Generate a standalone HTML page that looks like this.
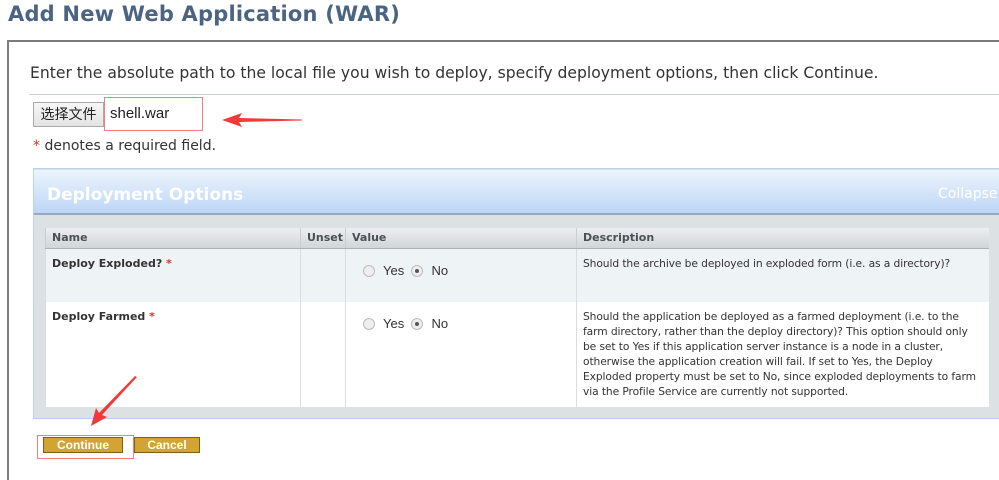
<!DOCTYPE html>
<html><head><meta charset="utf-8"><style>
*{box-sizing:border-box;margin:0;padding:0}
body{width:999px;height:473px;overflow:hidden;background:#fff;font-family:"DejaVu Sans",Verdana,sans-serif;position:relative}
.abs{position:absolute}
h1{position:absolute;left:8px;top:2px;font-size:21px;font-weight:bold;color:#4b6482;letter-spacing:0.2px;white-space:nowrap}
.box{left:7px;top:40px;width:1000px;height:440px;border:2px solid #7b7b7b;border-right:none;border-bottom:none}
.instr{left:30px;top:64px;font-size:15.6px;color:#333;white-space:nowrap}
.hr{left:29px;top:94px;width:970px;height:1px;background:#ccd3d8}
.fbtn{left:33px;top:102px;width:71px;height:25px;border:1px solid #a9a9a9;background:linear-gradient(#f7f7f7,#e3e3e3);font:14px "Noto Sans CJK SC",sans-serif;color:#222;text-align:center;line-height:23px}
.fname{left:110px;top:105px;font:15px "Liberation Sans",sans-serif;color:#222}
.redbox{border:1px solid #f08080}
.req{left:33px;top:138px;font-size:14px;color:#333;white-space:nowrap}
.req span{color:#e03030}
.panel{left:33px;top:168px;width:970px;height:251px;background:#dce1e4;border:1px solid #b9d0ee}
.phead{left:34px;top:170px;width:966px;height:45px;background:linear-gradient(#edf4fd,#bcd6f6);border-bottom:2px solid #97a9bd}
.ptitle{left:47px;top:185px;font-size:17px;font-weight:bold;color:#fff}
.coll{left:926px;top:186px;font-size:14px;color:#fff;white-space:nowrap}
table{position:absolute;left:45px;top:228px;width:944px;border-collapse:collapse;font-size:11px;color:#333}
th{height:20px;text-align:left;padding-left:6px;font-weight:bold;color:#4a5056;background:linear-gradient(#eceef0,#d2d6d9);border-left:1px solid #c8cdd1;border-bottom:1px solid #aab2b8}
td{vertical-align:top;border-left:1px solid #d8dde0;padding:8px 6px}
tr.r1 td{background:#eef3f6;height:54px}
tr.r2 td{background:#fff;height:104px}
td.n{font-weight:bold}
td.n span{color:#e03030}
td.d{line-height:15px;padding-top:7px;font-size:10.7px;letter-spacing:-0.1px}
.radio{display:inline-block;width:12px;height:12px;border:1px solid #bbb;border-radius:50%;background:#eee;vertical-align:-2px;margin-right:8px;position:relative}
.radio.on::after{content:"";position:absolute;left:3px;top:3px;width:4px;height:4px;border-radius:50%;background:#555}
.val{font:13px "Liberation Sans",sans-serif;color:#333;padding-left:17px;padding-top:14px!important}
.btn{height:16px;background:#d3a333;border:1px solid #7d6010;color:#fff;font:bold 12px "Liberation Sans",sans-serif;text-align:center;line-height:14px}
</style></head><body>
<h1>Add New Web Application (WAR)</h1>
<div class="abs box"></div>
<div class="abs instr">Enter the absolute path to the local file you wish to deploy, specify deployment options, then click Continue.</div>
<div class="abs hr"></div>
<div class="abs fbtn">选择文件</div>
<div class="abs fname">shell.war</div>
<div class="abs redbox" style="left:104px;top:97px;width:99px;height:34px"></div>
<svg class="abs" style="left:218px;top:113px" width="86" height="14"><polygon points="4,7 24,0 21,5 84,6.5 84,7.5 21,9 24,14" fill="#f03a3a"/></svg>
<div class="abs req"><span>*</span> denotes a required field.</div>
<div class="abs panel"></div>
<div class="abs phead"></div>
<div class="abs ptitle">Deployment Options</div>
<div class="abs coll"><span style="font-size:9px;color:#dde">≈</span> Collapse</div>
<table>
<tr><th style="width:255px">Name</th><th style="width:45px">Unset</th><th style="width:231px">Value</th><th>Description</th></tr>
<tr class="r1"><td class="n">Deploy Exploded? <span>*</span></td><td></td><td class="val"><span class="radio"></span>Yes &nbsp;<span class="radio on"></span>No</td><td class="d">Should the archive be deployed in exploded form (i.e. as a directory)?</td></tr>
<tr class="r2"><td class="n">Deploy Farmed <span>*</span></td><td></td><td class="val"><span class="radio"></span>Yes &nbsp;<span class="radio on"></span>No</td><td class="d">Should the application be deployed as a farmed deployment (i.e. to the farm directory, rather than the deploy directory)? This option should only be set to Yes if this application server instance is a node in a cluster, otherwise the application creation will fail. If set to Yes, the Deploy Exploded property must be set to No, since exploded deployments to farm via the Profile Service are currently not supported.</td></tr>
</table>
<div class="abs btn" style="left:43px;top:437px;width:80px">Continue</div>
<div class="abs btn" style="left:134px;top:437px;width:66px">Cancel</div>
<div class="abs redbox" style="left:37px;top:435px;width:97px;height:24px"></div>
<svg class="abs" style="left:88px;top:374px" width="52" height="56"><polygon points="3,52 8,34 11,39 47,2 49,3 14,41 19,43" fill="#f03a3a"/></svg>
</body></html>
